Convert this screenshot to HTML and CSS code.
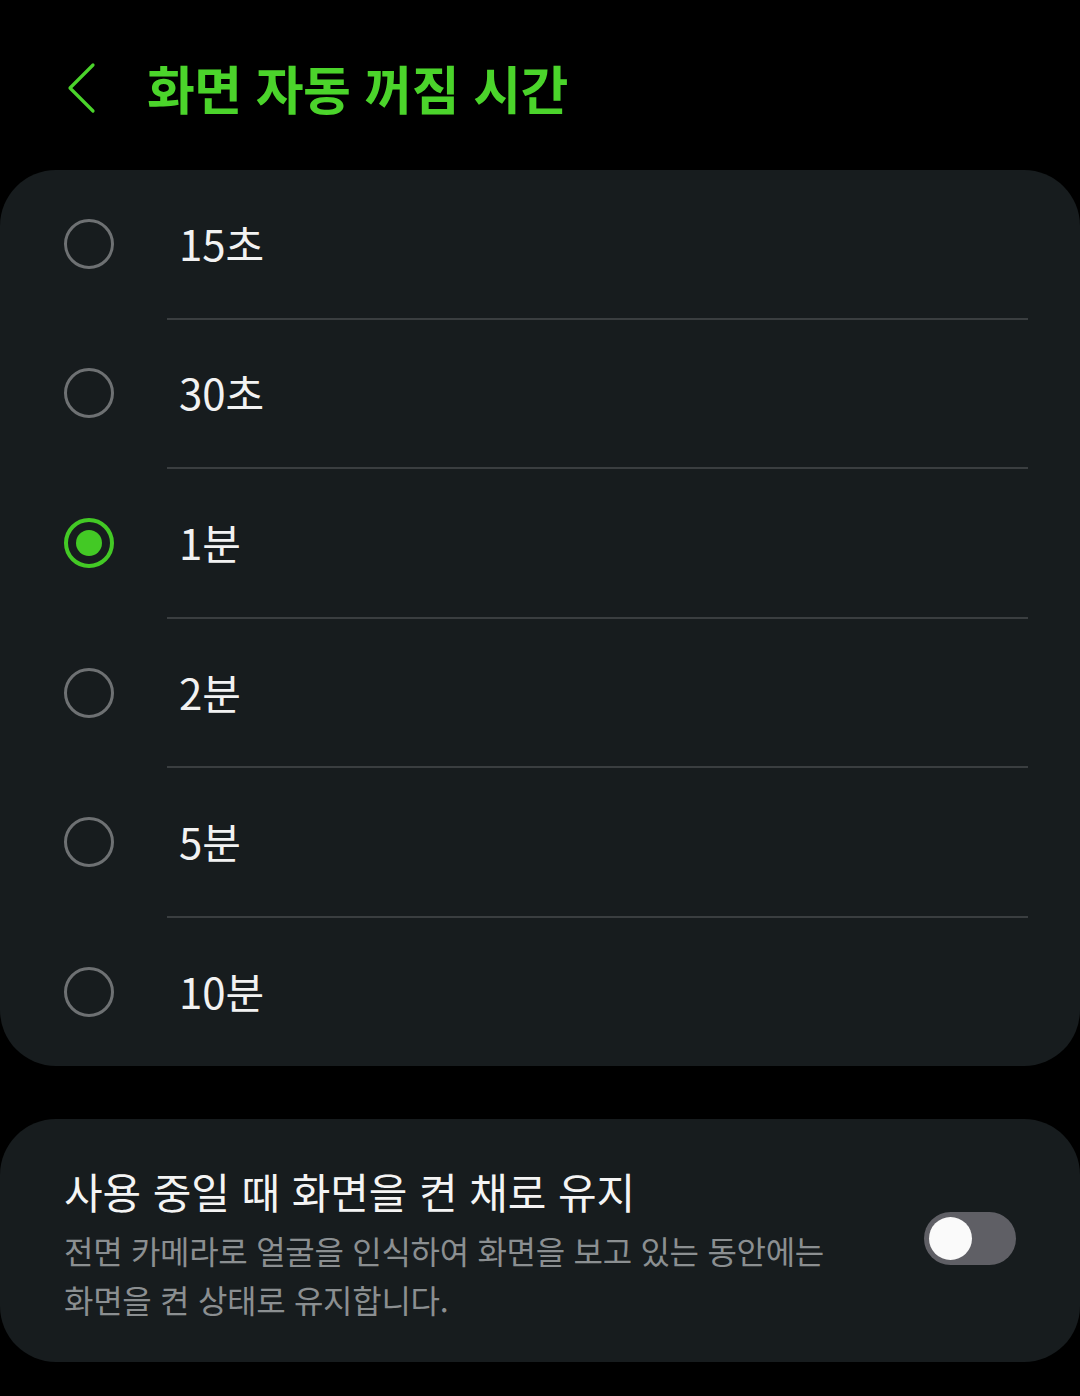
FILE: index.html
```html
<!DOCTYPE html>
<html lang="ko">
<head>
  <meta charset="UTF-8" />
  <title>화면 자동 꺼짐 시간</title>
  <link rel="stylesheet" href="styles.css">
</head>
<body>
  <header class="top-bar">
    <button class="back-btn" aria-label="뒤로">
      <svg width="34" height="52" viewBox="0 0 34 52">
        <polyline points="27,3 4,26 27,49" fill="none" stroke="#4bd42b" stroke-width="3.2" stroke-linecap="round" stroke-linejoin="round" />
      </svg>
    </button>
    <h1 class="page-title">화면 자동 꺼짐 시간</h1>
  </header>

  <section class="card options">
    <label class="option">
      <span class="radio"></span>
      <span class="option-label">15초</span>
    </label>
    <label class="option">
      <span class="radio"></span>
      <span class="option-label">30초</span>
    </label>
    <label class="option">
      <span class="radio checked"></span>
      <span class="option-label">1분</span>
    </label>
    <label class="option">
      <span class="radio"></span>
      <span class="option-label">2분</span>
    </label>
    <label class="option">
      <span class="radio"></span>
      <span class="option-label">5분</span>
    </label>
    <label class="option">
      <span class="radio"></span>
      <span class="option-label">10분</span>
    </label>
  </section>

  <section class="card setting">
    <div class="setting-text">
      <div class="setting-title">사용 중일 때 화면을 켠 채로 유지</div>
      <div class="setting-desc">전면 카메라로 얼굴을 인식하여 화면을 보고 있는 동안에는<br>화면을 켠 상태로 유지합니다.</div>
    </div>
    <span class="switch"><span class="switch-thumb"></span></span>
  </section>
</body>
</html>
```

FILE: styles.css
```css
body {
  margin: 0;
  background-color: #000;
  font-family: "Noto Sans CJK KR", "Noto Sans", sans-serif;
  color: #f2f2f2;
}

.top-bar {
  display: flex;
  align-items: center;
  height: 170px;
  padding-left: 66px;
  box-sizing: border-box;
  padding-top: 6px;
}

.back-btn {
  background: none;
  border: none;
  padding: 0;
  margin-right: 47px;
  display: flex;
  align-items: center;
  cursor: pointer;
}

.page-title {
  margin: 0;
  font-size: 52px;
  font-weight: 700;
  color: #4bd42b;
  letter-spacing: -0.5px;
  line-height: 1;
}

.card {
  background-color: #171c1e;
  border-radius: 56px;
}

.options {
  display: flex;
  flex-direction: column;
}

.option {
  display: flex;
  align-items: center;
  height: 147.6px;
  padding-left: 64px;
  position: relative;
}

.option + .option {
  border-top: 2px solid transparent;
}

.option + .option::before {
  content: "";
  position: absolute;
  top: -2px;
  left: 167px;
  right: 52px;
  height: 2px;
  background-color: #3a3e40;
}

.radio {
  width: 50px;
  height: 50px;
  box-sizing: border-box;
  border: 3px solid #6e7173;
  border-radius: 50%;
  margin-right: 65px;
  position: relative;
}

.radio.checked {
  border: 4px solid #43c925;
}

.radio.checked::after {
  content: "";
  position: absolute;
  top: 8px;
  left: 8px;
  width: 26px;
  height: 26px;
  border-radius: 50%;
  background-color: #43c925;
}

.option-label {
  font-size: 42px;
  letter-spacing: 0;
  line-height: 1;
  padding-bottom: 2px;
}

.setting {
  margin-top: 53px;
  display: flex;
  align-items: center;
  justify-content: space-between;
  padding: 44px 64px 38px 64px;
}

.setting-title {
  font-size: 42px;
  line-height: 56px;
  letter-spacing: -0.1px;
  color: #f4f4f4;
}

.setting-desc {
  margin-top: 7px;
  font-size: 32px;
  line-height: 49px;
  letter-spacing: -0.3px;
  color: #8b8f91;
}

.switch {
  width: 92px;
  height: 53px;
  border-radius: 27px;
  background-color: #5f5f65;
  position: relative;
  flex-shrink: 0;
  margin-bottom: 10px;
}

.switch-thumb {
  position: absolute;
  left: 5px;
  top: 5px;
  width: 43px;
  height: 43px;
  border-radius: 50%;
  background-color: #fafafa;
}
```
